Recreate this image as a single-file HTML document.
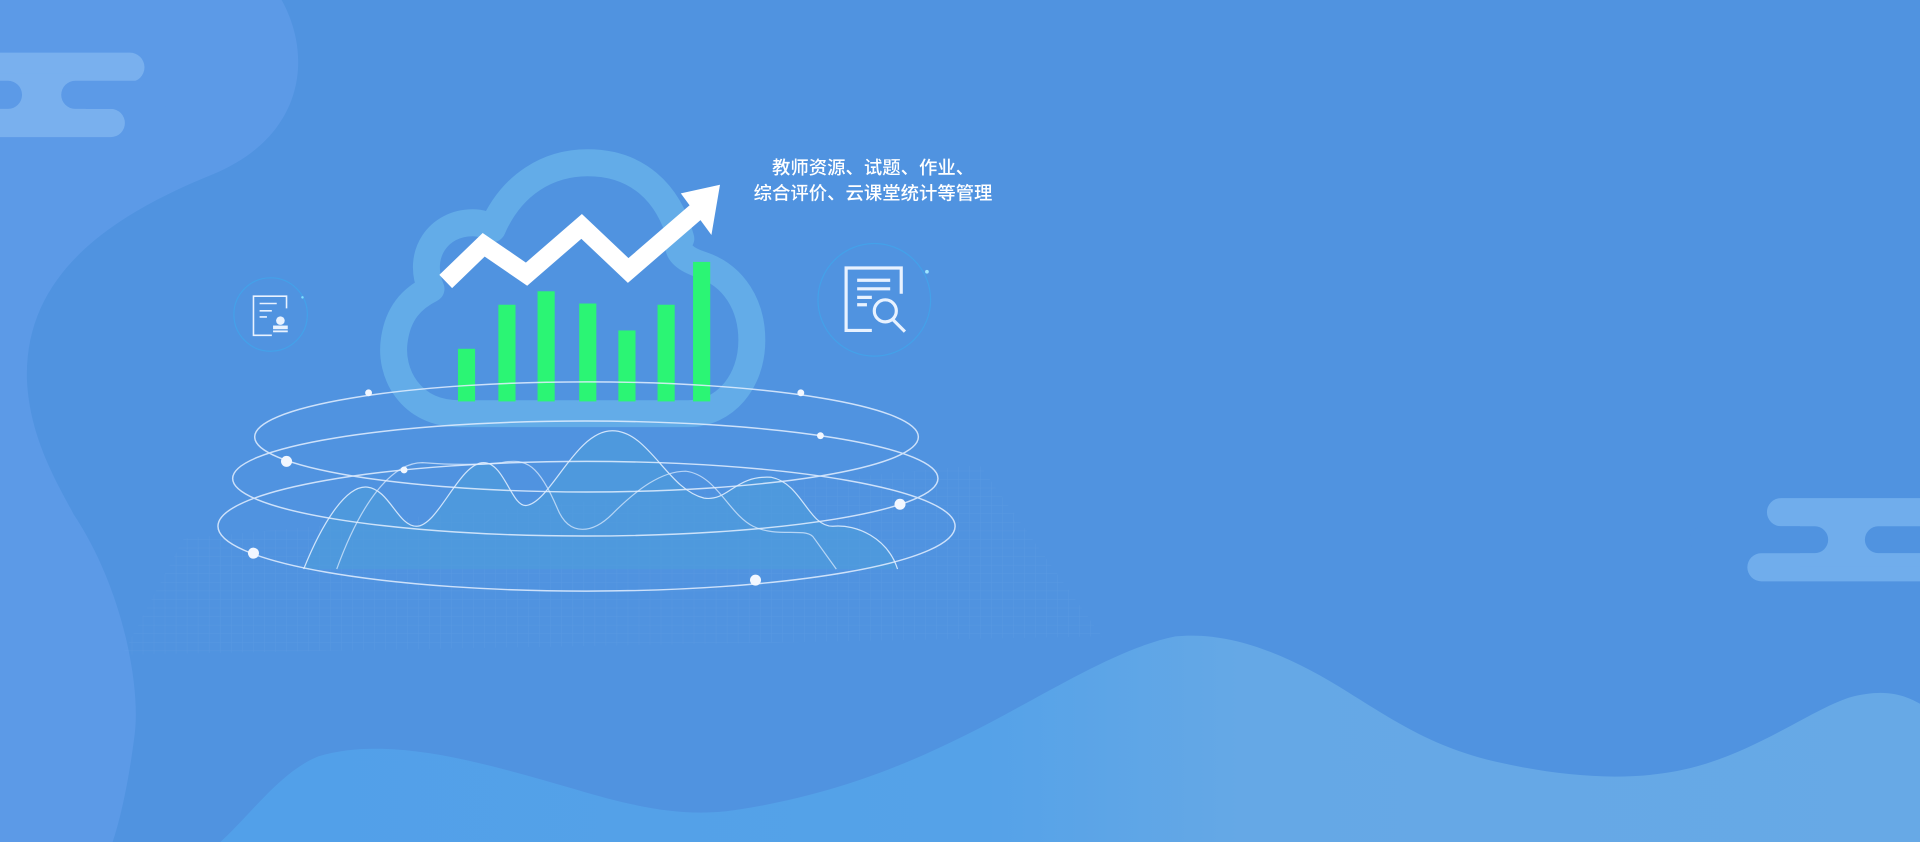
<!DOCTYPE html>
<html><head><meta charset="utf-8"><style>
html,body{margin:0;padding:0;width:1920px;height:842px;overflow:hidden;background:#5093E0}
svg{display:block}
</style></head><body>
<svg width="1920" height="842" viewBox="0 0 1568 688" preserveAspectRatio="none" xmlns="http://www.w3.org/2000/svg">
<defs>
<linearGradient id="wg" x1="0" y1="0" x2="1" y2="0">
<stop offset="0" stop-color="#52A0E9"/><stop offset="0.45" stop-color="#55A2E8"/><stop offset="0.6" stop-color="#65A8E6"/><stop offset="1" stop-color="#67A9E6"/>
</linearGradient>
<pattern id="grid" width="9" height="7" patternUnits="userSpaceOnUse">
<path d="M9 0V7M0 7H9" stroke="#8cbcf0" stroke-width="0.6" fill="none" opacity="0.3"/>
</pattern>
</defs>
<rect width="1568" height="688" fill="#5093E0"/>
<path d="M0 0 H230 C255 45 250 110 175 142 C80 180 20 230 22 310 C24 360 50 400 60 420 C100 480 115 560 110 600 C105 640 98 670 92 688 H0 Z" fill="#5C9AE7"/>
<!-- left cloud -->
<rect x="-20" y="43" width="138" height="24" rx="12" fill="#79B0EE"/>
<rect x="-20" y="89" width="122" height="23" rx="11.5" fill="#79B0EE"/>
<rect x="0" y="60" width="70" height="35" fill="#79B0EE"/>
<rect x="-20" y="66" width="38" height="23" rx="11.5" fill="#5C9AE7"/>
<rect x="50" y="66" width="90" height="23" rx="11.5" fill="#5C9AE7"/>
<!-- right cloud -->
<rect x="1443" y="407" width="150" height="23" rx="11.5" fill="#70ADEC"/>
<rect x="1427" y="452" width="160" height="23" rx="11.5" fill="#70ADEC"/>
<rect x="1470" y="418" width="98" height="45" fill="#70ADEC"/>
<rect x="1380" y="430" width="113" height="22" rx="11" fill="#5093E0"/>
<rect x="1523" y="430" width="80" height="22" rx="11" fill="#5093E0"/>
<path d="M180 688 C205 665 230 630 260 618 C320 600 400 625 470 645 C520 660 560 668 600 662 C680 650 740 625 790 600 C850 570 910 530 960 520 C1010 515 1060 540 1100 565 C1140 590 1170 610 1220 622 C1280 636 1340 640 1390 625 C1440 610 1480 580 1510 570 C1540 562 1555 568 1568 575 V688 Z" fill="url(#wg)"/>
<path d="M150 440 L800 380 L900 520 L100 535 Z" fill="url(#grid)" opacity="0.6"/>
<path d="M375 338 C335 338 318 305 322 278 C325 256 336 244 352 236 C340 208 358 182 386 182 C393 182 398 184 402 187 C418 150 448 133 480 133 C520 133 546 157 556 195 C550 205 560 212 572 216 C600 225 614 250 614 278 C614 312 592 338 562 338 Z" fill="none" stroke="#63ACE8" stroke-width="22" stroke-linejoin="round"/>
<g fill="#2BF574">
<rect x="374" y="285" width="14" height="43"/>
<rect x="407" y="249" width="14" height="79"/>
<rect x="439" y="238" width="14" height="90"/>
<rect x="473" y="248" width="14" height="80"/>
<rect x="505" y="270" width="14" height="58"/>
<rect x="537" y="249" width="14" height="79"/>
<rect x="566" y="214" width="14" height="114"/>
</g>
<polyline points="364,230 395,200 430,224 475,185 513,221 572,170" fill="none" stroke="#fff" stroke-width="15" stroke-linejoin="miter"/>
<polygon points="588,151 556,158 581,192" fill="#fff"/>
<path d="M248 465 C262 430 282 396 300 398 C318 400 325 430 340 430 C358 430 375 378 395 378 C412 378 418 415 430 413 C450 410 470 352 500 352 C530 352 545 400 575 407 C595 410 600 388 630 390 C655 395 660 430 680 430 C700 428 725 440 733 465 Z" fill="#4D9EDB" opacity="0.55"/>
<path d="M248 465 C262 430 282 396 300 398 C318 400 325 430 340 430 C358 430 375 378 395 378 C412 378 418 415 430 413 C450 410 470 352 500 352 C530 352 545 400 575 407 C595 410 600 388 630 390 C655 395 660 430 680 430 C700 428 725 440 733 465" fill="none" stroke="#cfe4fb" stroke-width="1"/>
<path d="M275 465 C295 410 320 378 345 378 C370 380 390 380 410 378 C430 374 440 380 455 415 C465 440 485 435 500 420 C520 400 540 385 560 385 C585 388 595 420 615 430 C635 440 660 430 665 440 L683 465" fill="none" stroke="#cfe4fb" stroke-width="1" opacity="0.8"/>
<g fill="none" stroke="#e3efff" stroke-width="1.2" opacity="0.85">
<ellipse cx="479" cy="357" rx="271" ry="45"/>
<ellipse cx="478" cy="391" rx="288" ry="47"/>
<ellipse cx="479" cy="430" rx="301" ry="53"/>
</g>
<g fill="#f2f7ff">
<circle cx="301" cy="321" r="2.8"/><circle cx="654" cy="321" r="2.8"/>
<circle cx="234" cy="377" r="4.5"/><circle cx="670" cy="356" r="2.8"/><circle cx="330" cy="384" r="2.8"/>
<circle cx="207" cy="452" r="4.5"/><circle cx="735" cy="412" r="4.5"/><circle cx="617" cy="474" r="4.5"/>
</g>
<circle cx="221" cy="257" r="30" fill="none" stroke="#3FA6EC" stroke-width="1" opacity="0.7"/>
<g fill="none" stroke="#e8f2ff" stroke-width="1.3">
<path d="M234 252 V242 H207 V274 H222"/>
<path d="M212 248 H226 M212 254 H222 M212 259 H218"/>
</g>
<circle cx="229" cy="262" r="3.5" fill="#e8f2ff"/>
<rect x="223" y="266" width="12" height="3" fill="#e8f2ff"/>
<rect x="223" y="270" width="12" height="1.5" fill="#e8f2ff"/>
<circle cx="247" cy="243" r="1" fill="#7fe0ff"/>
<circle cx="714" cy="245" r="46" fill="none" stroke="#3FA6EC" stroke-width="1" opacity="0.7"/>
<circle cx="757" cy="222" r="1.5" fill="#9fe6ff"/>
<g fill="none" stroke="#e8f2ff" stroke-width="2.6">
<path d="M736 240 V219 H691 V270 H712"/>
<path d="M700 229 H727 M700 236 H727 M700 243 H712 M700 249 H708"/>
<circle cx="723" cy="254" r="9"/>
<path d="M729 261 L739 271"/>
</g>
<g font-family="Liberation Sans, Noto Sans CJK SC, sans-serif" font-size="15" fill="#ffffff" text-anchor="middle" font-weight="500">
<text x="713" y="142">教师资源、试题、作业、</text>
<text x="713" y="163">综合评价、云课堂统计等管理</text>
</g>
</svg>
</body></html>
